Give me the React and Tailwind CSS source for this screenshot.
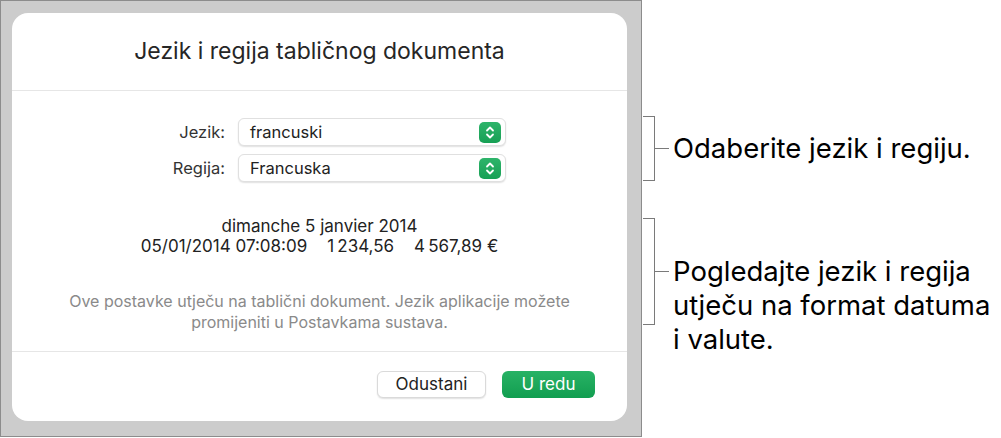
function Stepper() {
  return (
    <div className="w-[22px] h-[21px] rounded-[5px] bg-gradient-to-b from-[#2db46a] to-[#17a055] flex items-center justify-center">
      <svg width="10" height="15" viewBox="0 0 10 15" fill="none" stroke="white" strokeWidth="1.8" strokeLinecap="round" strokeLinejoin="round">
        <path d="M2 5.5 L5 2.5 L8 5.5" />
        <path d="M2 9.5 L5 12.5 L8 9.5" />
      </svg>
    </div>
  )
}

function SelectRow({ label, value }) {
  return (
    <div className="flex items-center">
      <div className="w-[226px] pr-[13px] text-right text-[16.5px] text-[#333]">{label}</div>
      <div className="w-[268px] h-[28px] rounded-[6px] border border-[#e0e0e0] shadow-[0_1px_1.5px_rgba(0,0,0,0.12)] bg-white flex items-center justify-between pl-[11px] pr-[4px]">
        <span className="text-[16.5px] text-[#222]">{value}</span>
        <Stepper />
      </div>
    </div>
  )
}

function Callout({ height, textOffset, children }) {
  return (
    <div className="flex items-start">
      <div className="flex items-center" style={{ height }}>
        <div className="w-[12px] h-full border-t-[1.5px] border-b-[1.5px] border-r-[1.5px] border-[#7a7a7a]" />
        <div className="w-[14px] h-[1.5px] bg-[#7a7a7a]" />
      </div>
      <div className="ml-[4px] text-[27.5px] leading-[34px] text-black" style={{ marginTop: textOffset }}>
        {children}
      </div>
    </div>
  )
}

export default function App() {
  return (
    <div className="w-[1001px] h-[438px] bg-white flex font-[Inter]">
      <div className="w-[642px] h-[437px] bg-[#cccccc] border border-[#8c8c8c] pl-[11px] pt-[12px]">
        <div className="w-[615px] h-[408px] rounded-[16px] bg-white flex flex-col">
          <div className="h-[78px] flex items-center justify-center border-b border-[#e6e6e6]">
            <h1 className="text-[23px] text-[#262626]">Jezik i regija tabličnog dokumenta</h1>
          </div>
          <div className="flex-1 flex flex-col border-b border-[#e6e6e6]">
            <div className="mt-[27px] flex flex-col gap-[8px]">
              <SelectRow label="Jezik:" value="francuski" />
              <SelectRow label="Regija:" value="Francuska" />
            </div>
            <div className="mt-[34px] text-center text-[17px] leading-[20px] text-[#222]">
              <div>dimanche 5 janvier 2014</div>
              <div>
                05/01/2014 07:08:09<span className="ml-[20px]">1{'\u202f'}234,56</span><span className="ml-[20px]">4{'\u202f'}567,89 €</span>
              </div>
            </div>
            <div className="mt-[35px] text-center text-[16px] leading-[21px] text-[#8a8a8a]">
              <div>Ove postavke utječu na tablični dokument. Jezik aplikacije možete</div>
              <div>promijeniti u Postavkama sustava.</div>
            </div>
          </div>
          <div className="h-[69px] flex items-center justify-end gap-[16px] pr-[32px] pb-[4px]">
            <button className="w-[109px] h-[27px] rounded-[6px] border border-[#dadada] shadow-[0_1px_1.5px_rgba(0,0,0,0.12)] bg-white text-[17px] text-[#222]">Odustani</button>
            <button className="w-[93px] h-[27px] rounded-[6px] bg-gradient-to-b from-[#27b265] to-[#119e50] text-[17px] text-white">U redu</button>
          </div>
        </div>
      </div>
      <div className="pt-[116px] pl-[1px] flex flex-col gap-[37px]">
        <Callout height={65} textOffset={15}>Odaberite jezik i regiju.</Callout>
        <Callout height={107} textOffset={36}>
          <div>Pogledajte jezik i regija</div>
          <div>utječu na format datuma</div>
          <div>i valute.</div>
        </Callout>
      </div>
    </div>
  )
}
